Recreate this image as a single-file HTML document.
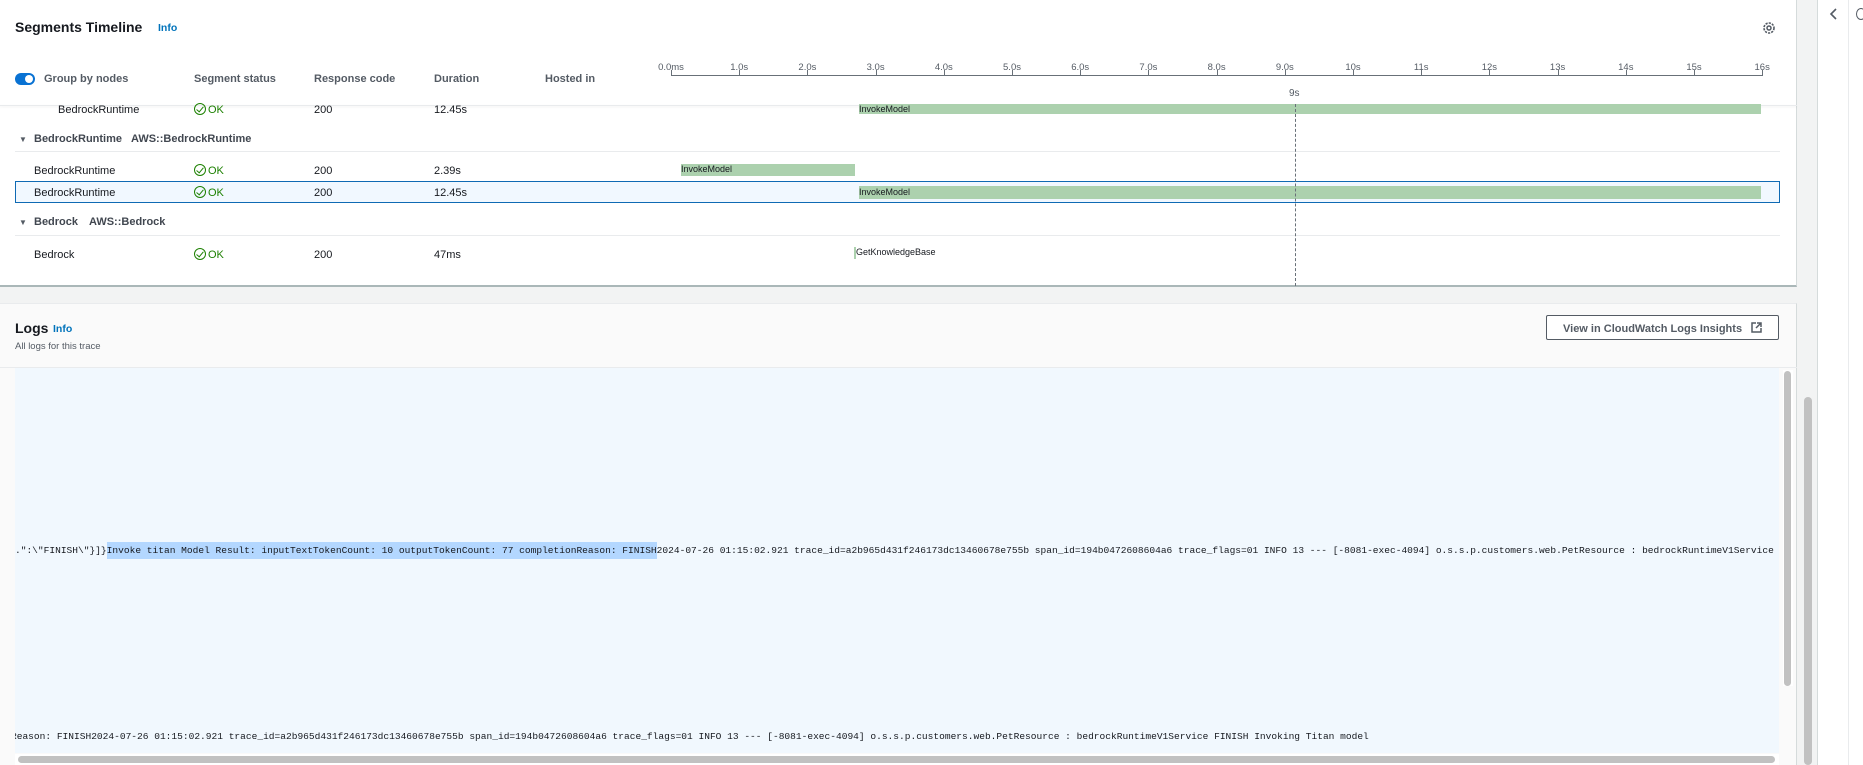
<!DOCTYPE html>
<html><head><meta charset="utf-8"><style>
*{box-sizing:border-box;margin:0;padding:0}
body{width:1863px;height:765px;overflow:hidden;background:#f2f3f3;font-family:"Liberation Sans",sans-serif;color:#16191f;position:relative}
.a{position:absolute;white-space:nowrap}
.t{font-size:11px}
.h{font-size:11px;font-weight:bold;color:#545b64}
.ok{color:#1d8102;font-size:11px}
.ok i{display:inline-block;width:12px;height:12px;border:1.5px solid #1d8102;border-radius:50%;vertical-align:-2px;margin-right:2px;position:relative}
.ok i:after{content:"";position:absolute;left:3px;top:1px;width:3px;height:6px;border:solid #1d8102;border-width:0 1.5px 1.5px 0;transform:rotate(40deg)}
.bar{position:absolute;background:#acd1ae;font-size:9px;color:#16191f;line-height:11px;overflow:visible}
.lbl{font-size:9.5px;color:#545b64;position:absolute;top:62px;transform:translateX(-50%)}
.tick{position:absolute;top:70px;width:1px;height:6px;background:#687078}
.sep{position:absolute;left:15px;width:1765px;height:1px;background:#e9ebed}
.mono{font-family:"Liberation Mono",monospace;font-size:9.55px;color:#16191f}
</style></head><body>
<div class="a" style="left:0;top:0;width:1797px;height:287px;background:#fff;border-bottom:2px solid #aab7b8;border-right:1px solid #d5dbdb"></div>
<div class="a" style="left:15px;top:19px;font-size:14px;font-weight:bold">Segments Timeline</div>
<div class="a" style="left:158px;top:22px;font-size:10.5px;font-weight:bold;color:#0073bb">Info</div>
<svg class="a" style="left:1762px;top:21px" width="14" height="14" viewBox="0 0 14 14"><circle cx="7" cy="7" r="5" fill="none" stroke="#545b64" stroke-width="1.6" stroke-dasharray="2.2 1.1"/><circle cx="7" cy="7" r="2" fill="none" stroke="#545b64" stroke-width="1.5"/></svg>
<div class="a" style="left:15px;top:73px;width:20px;height:12px;border-radius:6px;background:#0972d3"></div>
<div class="a" style="left:25px;top:75px;width:8px;height:8px;border-radius:50%;background:#fff"></div>
<div class="a h" style="left:44px;top:73px">Group by nodes</div>
<div class="a h" style="left:194px;top:73px">Segment status</div>
<div class="a h" style="left:314px;top:73px">Response code</div>
<div class="a h" style="left:434px;top:73px">Duration</div>
<div class="a h" style="left:545px;top:73px">Hosted in</div>
<div class="a" style="left:671px;top:75px;width:1092px;height:1px;background:#687078"></div>
<div id="ax"></div>
<div class="a" style="left:1289px;top:88px;font-size:10px;color:#545b64">9s</div>
<div class="a" style="left:0;top:105px;width:1797px;height:1px;background:#e9ebed;box-shadow:0 1px 2px rgba(0,0,0,.08)"></div>
<div class="a" style="left:1295px;top:104px;height:182px;border-left:1px dashed #687078;z-index:3"></div>
<div class="a t" style="left:58px;top:104px">BedrockRuntime</div>
<div class="a ok" style="left:194px;top:103px"><i></i>OK</div>
<div class="a t" style="left:314px;top:104px">200</div>
<div class="a t" style="left:434px;top:104px">12.45s</div>
<div class="bar" style="left:859px;top:104px;width:902px;height:10px">InvokeModel</div>

<div class="a" style="left:19px;top:135px;font-size:8px;color:#545b64">▼</div>
<div class="a h" style="left:34px;top:133px;color:#414750">BedrockRuntime</div>
<div class="a h" style="left:131px;top:133px;color:#414750">AWS::BedrockRuntime</div>
<div class="sep" style="top:151px"></div>

<div class="a t" style="left:34px;top:165px">BedrockRuntime</div>
<div class="a ok" style="left:194px;top:164px"><i></i>OK</div>
<div class="a t" style="left:314px;top:165px">200</div>
<div class="a t" style="left:434px;top:165px">2.39s</div>
<div class="bar" style="left:681px;top:164px;width:174px;height:12px">InvokeModel</div>

<div class="a" style="left:15px;top:181px;width:1765px;height:22px;background:#f1f8ff;border:1px solid #0f6ab4"></div>
<div class="a t" style="left:34px;top:187px">BedrockRuntime</div>
<div class="a ok" style="left:194px;top:186px"><i></i>OK</div>
<div class="a t" style="left:314px;top:187px">200</div>
<div class="a t" style="left:434px;top:187px">12.45s</div>
<div class="bar" style="left:859px;top:186px;width:902px;height:13px;line-height:13px">InvokeModel</div>

<div class="a" style="left:19px;top:218px;font-size:8px;color:#545b64">▼</div>
<div class="a h" style="left:34px;top:216px;color:#414750">Bedrock</div>
<div class="a h" style="left:89px;top:216px;color:#414750">AWS::Bedrock</div>
<div class="sep" style="top:235px"></div>

<div class="a t" style="left:34px;top:249px">Bedrock</div>
<div class="a ok" style="left:194px;top:248px"><i></i>OK</div>
<div class="a t" style="left:314px;top:249px">200</div>
<div class="a t" style="left:434px;top:249px">47ms</div>
<div class="a" style="left:854px;top:247px;width:2px;height:12px;background:#acd1ae"></div>
<div class="a" style="left:856px;top:247px;font-size:9px">GetKnowledgeBase</div>

<div class="a" style="left:0;top:303px;width:1797px;height:462px;background:#fafafa;border-top:1px solid #e9ebed;border-right:1px solid #d5dbdb"></div>
<div class="a" style="left:15px;top:320px;font-size:14px;font-weight:bold">Logs</div>
<div class="a" style="left:53px;top:323px;font-size:10.5px;font-weight:bold;color:#0073bb">Info</div>
<div class="a" style="left:15px;top:341px;font-size:9.5px;color:#545b64">All logs for this trace</div>
<div class="a" style="left:1546px;top:315px;width:233px;height:25px;border:1px solid #545b64;border-radius:2px;background:#fff;font-size:11px;font-weight:bold;color:#545b64;padding:6px 0 0 16px">View in CloudWatch Logs Insights <svg width="11" height="11" viewBox="0 0 11 11" style="margin-left:6px;vertical-align:-1px"><path d="M5 1H1V10H10V6M6 1H10V5M10 1L5 6" fill="none" stroke="#545b64" stroke-width="1.5"/></svg></div>
<div class="a" style="left:0;top:367px;width:1797px;height:1px;background:#e9ebed"></div>
<div class="a" style="left:15px;top:368px;width:1764px;height:385px;background:#f1f8fe;overflow:hidden">
 <div class="a mono" style="left:0;top:177px">.":\"FINISH\"}]}<span style="background:#b3d7ff;padding:3px 0">Invoke titan Model Result: inputTextTokenCount: 10 outputTokenCount: 77 completionReason: FINISH</span>2024-07-26 01:15:02.921 trace_id=a2b965d431f246173dc13460678e755b span_id=194b0472608604a6 trace_flags=01 INFO 13 --- [-8081-exec-4094] o.s.s.p.customers.web.PetResource : bedrockRuntimeV1Service</div>
 <div class="a mono" style="left:-4px;top:363px">Reason: FINISH2024-07-26 01:15:02.921 trace_id=a2b965d431f246173dc13460678e755b span_id=194b0472608604a6 trace_flags=01 INFO 13 --- [-8081-exec-4094] o.s.s.p.customers.web.PetResource : bedrockRuntimeV1Service FINISH Invoking Titan model</div>
</div>
<div class="a" style="left:1783px;top:370px;width:10px;height:316px;background:#fff"></div>
<div class="a" style="left:1784px;top:371px;width:7px;height:315px;border-radius:4px;background:#c1c1c1"></div>
<div class="a" style="left:15px;top:754px;width:1764px;height:11px;background:#fff"></div>
<div class="a" style="left:18px;top:756px;width:1757px;height:7px;border-radius:4px;background:#c1c1c1"></div>
<div class="a" style="left:1817px;top:0;width:46px;height:765px;background:#fff;border-left:1px solid #d5dbdb"></div>
<div class="a" style="left:1848px;top:0;width:1px;height:765px;background:#e9ebed"></div>
<div class="a" style="left:1804px;top:397px;width:8px;height:368px;border-radius:4px;background:#c1c1c1"></div>
<svg class="a" style="left:1829px;top:7px" width="10" height="14"><path d="M7 2 L2 7 L7 12" fill="none" stroke="#545b64" stroke-width="1.6"/></svg>
<div class="a" style="left:1856px;top:8px;width:10px;height:12px;border:1.5px solid #545b64;border-radius:50%"></div>
<script>
var L=["0.0ms","1.0s","2.0s","3.0s","4.0s","5.0s","6.0s","7.0s","8.0s","9.0s","10s","11s","12s","13s","14s","15s","16s"],h="";
for(var i=0;i<17;i++){var x=671+i*68.2;h+='<div class="lbl" style="left:'+x+'px">'+L[i]+'</div><div class="tick" style="left:'+x+'px"></div>';}
document.getElementById("ax").innerHTML=h;
</script>
</body></html>
